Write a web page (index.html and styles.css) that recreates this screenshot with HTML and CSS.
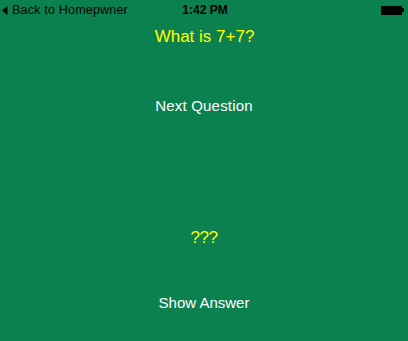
FILE: index.html
```html
<!DOCTYPE html>
<html lang="en">
<head>
<meta charset="utf-8">
<title>Quiz</title>
<link rel="stylesheet" href="styles.css">
</head>
<body>
<div class="screen">
  <header class="status-bar">
    <div class="back">
      <svg class="back-arrow" width="6" height="9" viewBox="0 0 6 9"><polygon points="5.5,0 5.5,9 0,4.5" fill="#000"/></svg>
      <span class="back-label">Back to Homepwner</span>
    </div>
    <div class="time">1:42 PM</div>
    <div class="battery-wrap">
      <span class="battery"></span><span class="battery-nub"></span>
    </div>
  </header>
  <main class="quiz">
    <div class="question">What is 7+7?</div>
    <div class="btn next">Next Question</div>
    <div class="answer">???</div>
    <div class="btn show">Show Answer</div>
  </main>
</div>
</body>
</html>
```
FILE: styles.css
```css
html, body {
  margin: 0;
  padding: 0;
}
body {
  background: #0c8150;
  font-family: "Liberation Sans", Arial, sans-serif;
}
.screen {
  width: 408px;
  height: 341px;
  overflow: hidden;
}
.status-bar {
  height: 20px;
  display: grid;
  grid-template-columns: 1fr auto 1fr;
  align-items: center;
  font-size: 12px;
  color: #000;
}
.back {
  display: flex;
  align-items: center;
  padding-left: 2px;
}
.back-arrow {
  display: block;
  margin-right: 4px;
}
.back-label {
  line-height: 20px;
  font-size: 12.5px;
  letter-spacing: 0.2px;
}
.time {
  font-weight: bold;
  line-height: 20px;
  padding-left: 2px;
}
.battery-wrap {
  display: flex;
  justify-content: flex-end;
  align-items: center;
  padding-right: 4px;
}
.battery {
  display: block;
  width: 21px;
  height: 9px;
  background: #000;
}
.battery-nub {
  display: block;
  width: 2px;
  height: 4px;
  background: #000;
}
.quiz {
  display: flex;
  flex-direction: column;
  align-items: center;
  line-height: 20px;
}
.question {
  color: #ffff00;
  font-size: 17px;
  margin-top: 7px;
  padding-left: 1px;
}
.btn {
  color: #fff;
  font-size: 15px;
}
.next {
  margin-top: 49px;
  letter-spacing: 0.2px;
}
.answer {
  color: #ffff00;
  font-size: 17px;
  margin-top: 112px;
  letter-spacing: -0.5px;
}
.show {
  margin-top: 45px;
}
```
